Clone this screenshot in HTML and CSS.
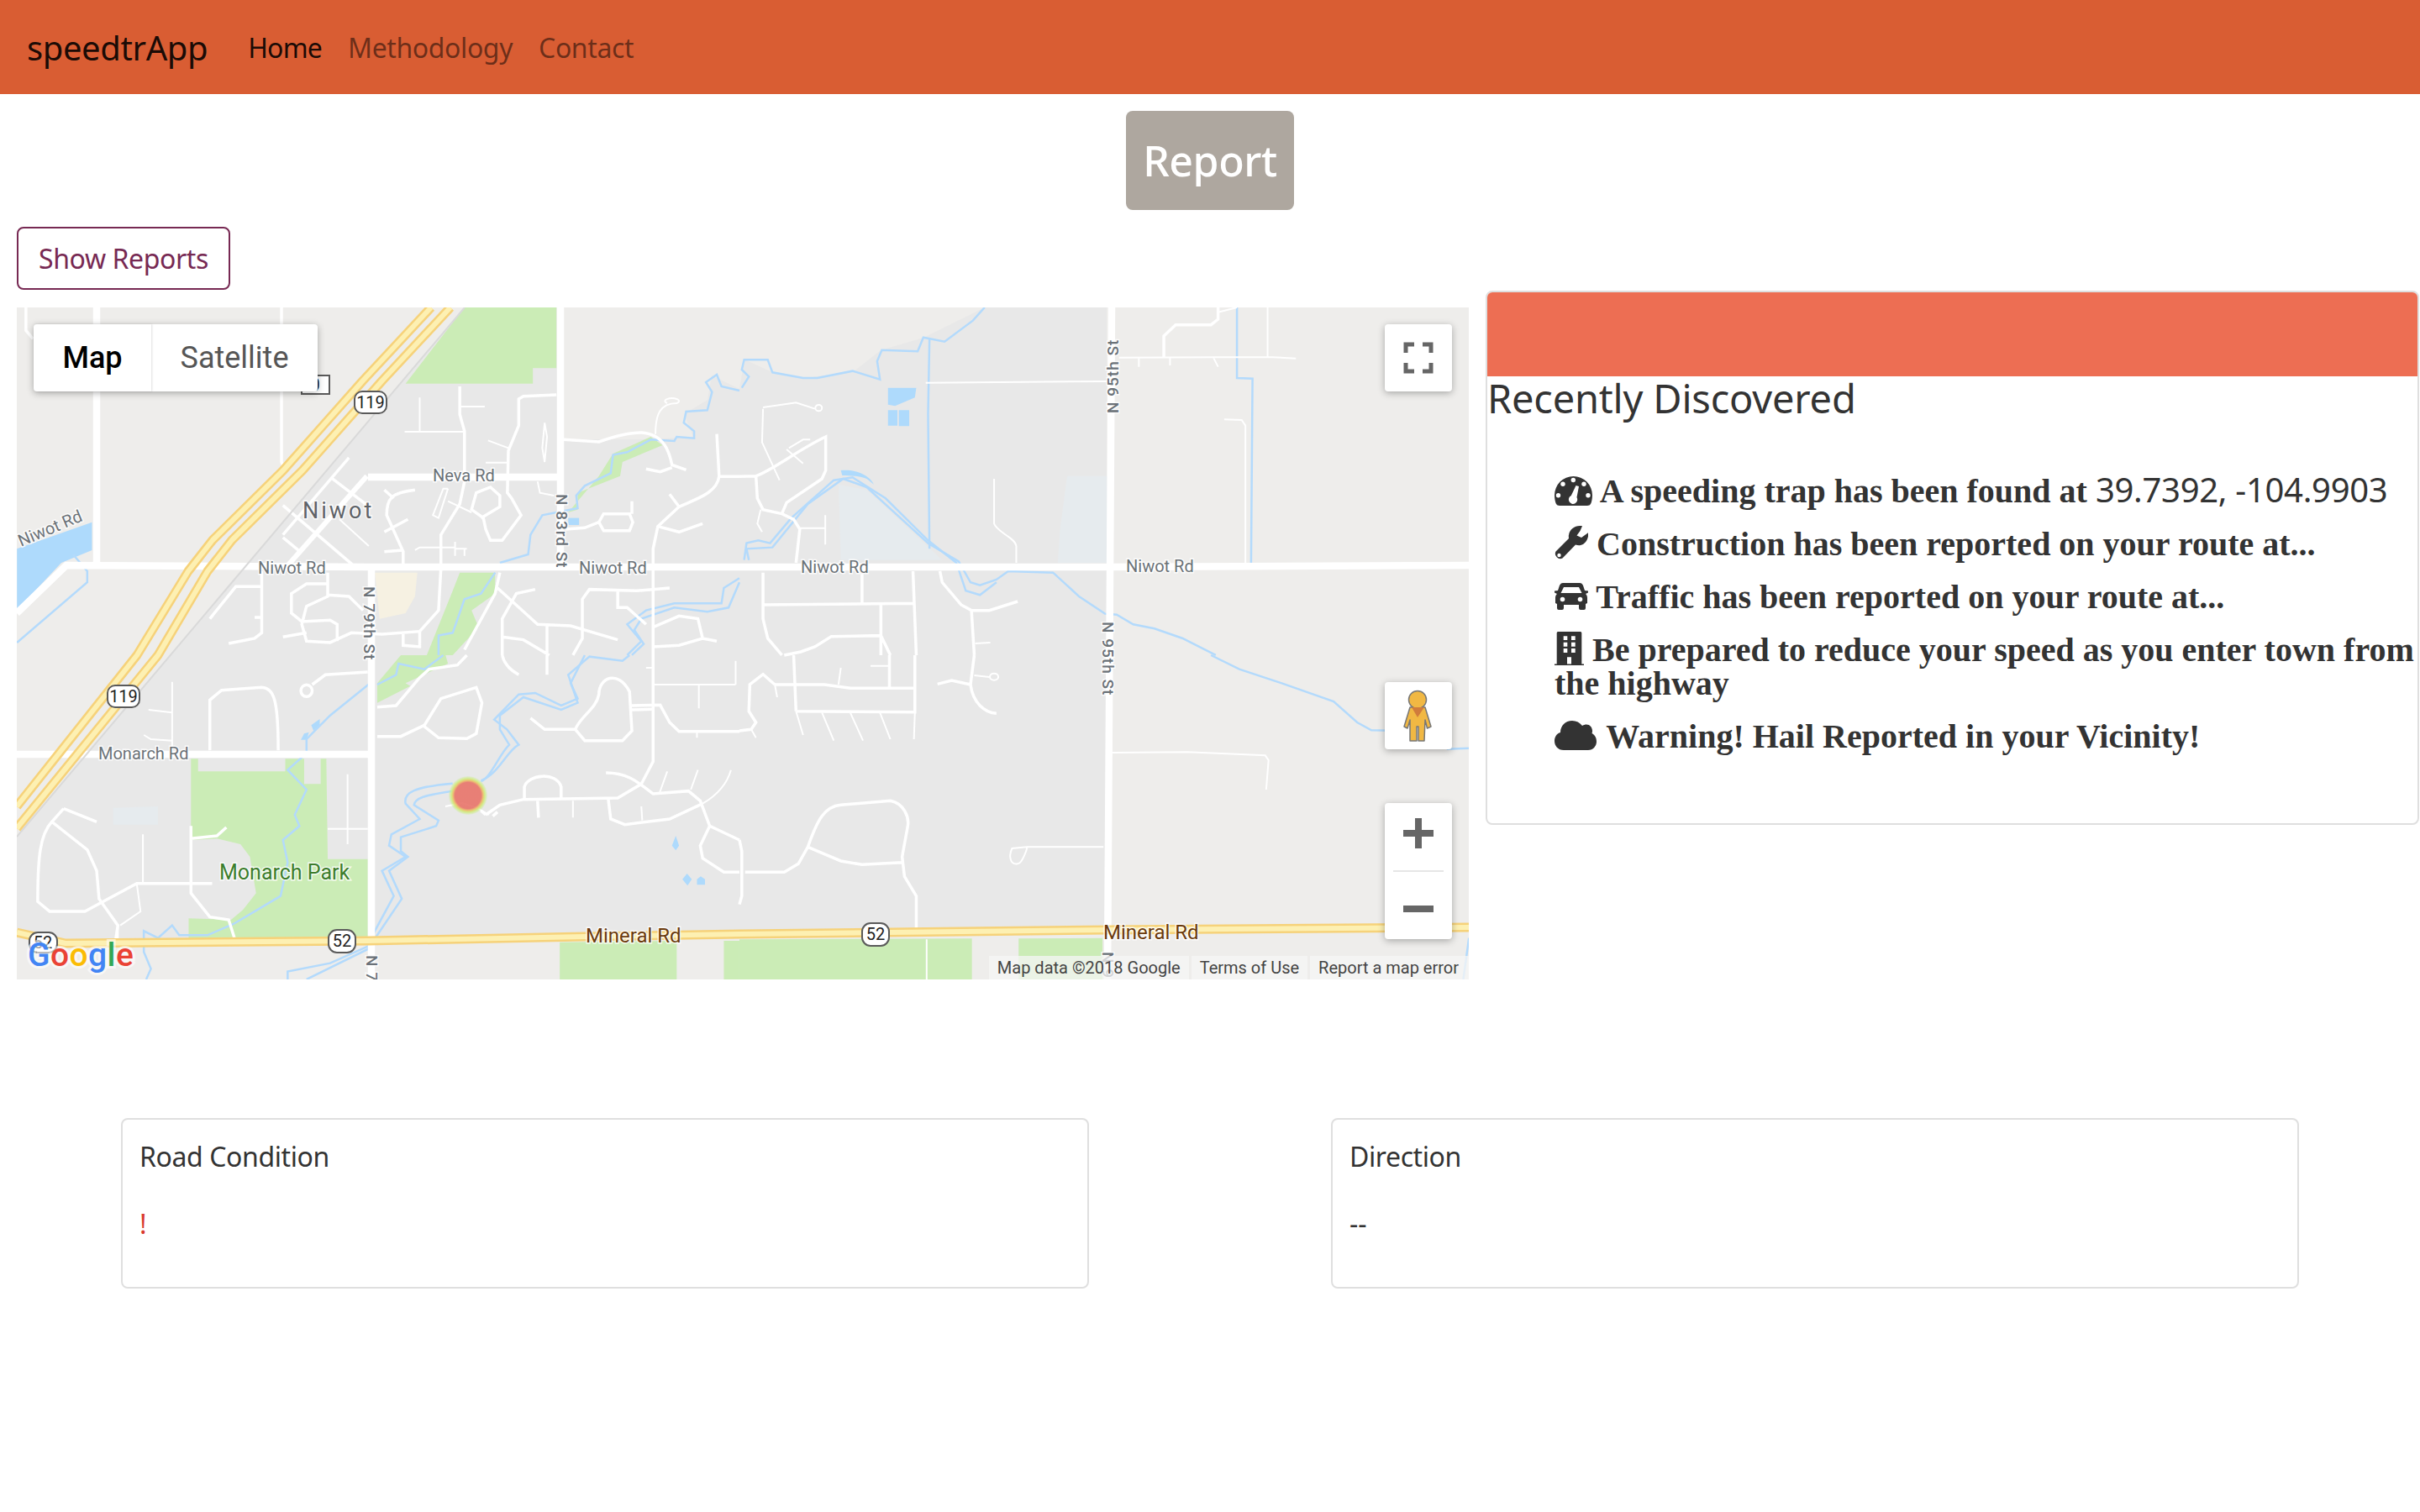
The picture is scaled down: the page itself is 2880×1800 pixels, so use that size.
FILE: index.html
```html
<!DOCTYPE html>
<html lang="en">
<head>
  <meta charset="UTF-8">
  <title>speedtrApp</title>
  <link rel="stylesheet" href="styles.css">
</head>
<body>
  <nav class="navbar">
    <a class="brand" href="#">speedtrApp</a>
    <a class="nav-link active" href="#">Home</a>
    <a class="nav-link" href="#">Methodology</a>
    <a class="nav-link" href="#">Contact</a>
  </nav>

  <div class="report-row">
    <button class="report-btn">Report</button>
  </div>

  <div class="main-row">
    <div class="map-col">
      <button class="show-btn">Show Reports</button>
      <div class="map">
        <svg class="map-svg" viewBox="0 0 1728 800" width="1728" height="800">
          <defs>
            <radialGradient id="heat">
              <stop offset="0" stop-color="#e8766c"/>
              <stop offset="0.68" stop-color="#e8766c"/>
              <stop offset="0.78" stop-color="#ebc06a"/>
              <stop offset="0.86" stop-color="#d2ea7c"/>
              <stop offset="1" stop-color="#c8ee90" stop-opacity="0.2"/>
            </radialGradient>
          </defs>
          <rect width="1728" height="800" fill="#eeedeb"/>
          <path class="urban" d="M533 0L648 0L648 157L754 157L805 154L794 127L822 110L827 81L860 97L866 62L899 77L936 84L995 77L1028 51L1079 36L1152 0L1297 0L1297 742L676 749L418 754L58 757L0 744L0 630Z"/>

          <!-- left half, upper -->
          <g transform="translate(-20,-6) scale(.5612,.3333)">
            <path class="park" d="M985 18L1180 18L1180 235L1130 235L1130 290L860 290Z"/>
            <path class="park" d="M1380 480L1405 510L1320 570L1315 620L1225 680L1225 740L1205 750L1270 620L1300 540Z"/>
            <path class="park" d="M975 965L1050 965L1050 1040L1000 1100L1015 1160L960 1260L905 1260L960 1030Z"/>
            <path class="school" d="M795 965L885 965L880 1050L860 1110L805 1130Z"/>
            <path class="water" d="M36 880L195 785L195 885L130 930L80 1020L36 1100Z"/>
            <path class="water" d="M1205 770L1228 770L1228 795L1205 795Z"/>
            <path class="river" d="M155 900L185 960L185 1000L36 1215"/>
            <path class="river" d="M1568 315L1530 300L1520 258L1497 285L1510 320L1500 385L1455 390L1450 430L1472 460L1472 485L1435 480L1430 495L1380 490L1330 535L1300 545L1295 610L1240 655L1222 690L1225 735L1150 760L1125 830L1120 900L1060 930"/>
            <path class="river" d="M1050 965L1020 1040L985 1060L960 1180L930 1190L930 1260"/>
            <path class="river" d="M1568 985L1535 1020L1530 1075L1430 1075L1370 1100L1330 1150L1360 1210L1330 1260"/>
            <path class="river" d="M1568 1000L1545 1090L1500 1105L1430 1090L1360 1130L1345 1170L1365 1220L1340 1260"/>
            <path class="road" d="M597 18L597 570L605 605M55 18L55 100L70 130"/>
            <path class="road" d="M1195 490L1270 498C1300 480 1330 465 1360 465C1410 470 1420 540 1425 580L1455 598M1370 595L1400 605L1425 590"/>
            <path class="road" d="M1180 330L1110 335L1100 345L1100 440L1078 530L1076 680L1085 700L1105 760L1065 850L1040 850L1030 810L1025 770L1000 740L1010 680L1040 660L1060 690L1060 730L1020 770"/>
            <path class="road" d="M975 300L975 400L985 460L985 640L975 720L935 830L935 940"/>
            <path class="road thin" d="M975 372L1028 372M890 340L890 462M858 462L985 462M1035 493L1078 520M1030 572L1076 572"/>
            <path class="road" d="M740 555L600 830M705 630L775 720M600 725L750 940M600 840L640 895"/>
            <path class="road thin" d="M720 775L782 870"/>
            <path class="road wide" d="M778 620L610 940"/>
            <path class="road" d="M880 670C830 680 820 700 820 760L855 890L855 940M815 820L865 775M815 890L855 885M815 670L835 700"/>
            <path class="road thin" d="M1140 640L1145 680L1175 690"/>
            <path class="road" d="M1568 622L1525 622L1520 470M1525 622C1520 680 1480 700 1440 730M1420 685L1440 730L1395 800L1385 880L1385 1260M1395 800L1440 820L1490 790"/>
            <path class="road" d="M1280 755L1335 755L1342 785L1335 815L1280 815L1270 785ZM1340 710L1340 755M1200 810L1240 805L1270 785"/>
            <path class="road thin" d="M1415 360a15 10 0 1 1 20 0C1400 360 1390 400 1390 470M1155 430L1160 480L1155 570L1150 520Z"/>
            <path class="road thin" d="M950 665L940 665L918 760L930 770L950 665M950 710L1000 750"/>
            <path class="road thin" d="M880 885L890 875L965 875M965 855L965 905M990 880L965 880M985 880L985 905"/>
            <path class="road" d="M555 960L555 1180L540 1200L485 1218M555 1015L500 1015L445 1130M540 1125L555 1125"/>
            <path class="road" d="M695 965L695 1050L650 1085L640 1150L650 1210L700 1215L745 1180L810 1185L890 1175L930 1100L935 950M695 1005L650 1005L618 1040L618 1110L640 1140L700 1135L715 1150L715 1210M695 1045L740 1050L770 1100"/>
            <path class="road" d="M600 1195L650 1180M855 1185L855 1225L890 1230L890 1175"/>
            <path class="road" d="M1060 965L1050 1040L985 1240M1055 1020L1140 1150L1210 1155L1310 1205M1135 1025L1095 1040L1065 1130L1065 1260M1065 1195L1110 1205L1165 1260M1160 1150L1160 1260"/>
            <path class="road" d="M1420 1020L1350 1030L1250 1025L1235 1060L1235 1200L1215 1260M1310 1030L1310 1090L1330 1090L1370 1150"/>
            <path class="road" d="M1385 1160L1440 1120L1480 1130L1490 1200M1385 1230L1440 1225L1490 1200L1520 1210"/>
          </g>

          <!-- left half, lower -->
          <g transform="translate(-20,414) scale(.5612,.3333)">
            <path class="park" d="M405 370L420 370L420 415L605 415L605 370L645 370L645 460L680 460L680 370L692 370L695 728L780 728L780 1010L400 1020L400 940L490 945L515 910L543 850L530 720L510 675L460 655L405 660Z"/>
            <path class="park" d="M850 0L945 0L950 30L860 100L870 110L800 170L800 100Z"/>
            <path class="park" d="M1187 1025L1435 1020L1435 1158L1187 1158ZM1535 1020L1568 1020L1568 1158L1535 1158Z"/>
            <path class="patch" d="M240 545L335 540L335 605L240 605Z"/>
            <path class="water" d="M1425 680L1433 645L1440 680L1433 697ZM1447 800L1457 780L1467 800L1458 823ZM1478 800L1486 790L1495 800L1495 820L1478 820ZM645 280L655 275L650 302L638 302ZM660 250L678 228L678 250L665 270Z"/>
            <path class="river" d="M785 100L700 215L650 300L650 350L610 410L650 480L625 570L635 610L600 660L610 740L595 860L545 910L495 960L440 1000L380 1000L365 965L335 1010L305 985L305 1060L320 1120L310 1158"/>
            <path class="river" d="M940 0L900 50L845 30L840 70L800 105"/>
            <path class="river" d="M960 458C880 470 855 490 860 530L890 585L830 640L825 680L860 720L810 770L835 860L790 1000L780 1040L700 1100L610 1130L610 1158"/>
            <path class="river" d="M960 485C900 500 880 510 878 535L930 590L925 610L850 650L850 700L865 720L825 770L852 870L800 1000L780 1050L650 1158"/>
            <path class="river" d="M1020 448C1060 420 1075 340 1100 320L1075 265L1048 230L1100 140L1135 135L1190 180L1225 155L1210 100L1240 0"/>
            <path class="river" d="M1020 450C1040 440 1060 350 1080 320L1060 265L1060 215L1110 150L1190 195L1225 170L1205 70L1250 5L1320 20L1335 0"/>
            <path class="road thin" d="M365 95L365 340M315 195L365 205M305 285L320 300L365 305"/>
            <path class="road" d="M445 340L445 160L470 125L555 115C580 120 590 150 590 340"/>
            <path class="road" d="M780 60L690 70L662 105M800 185L840 180L890 80L910 50L970 35L990 0M1065 0C1070 40 1090 60 1100 70M1160 0L1160 70"/>
            <ellipse class="road" cx="650" cy="127" rx="12" ry="21"/>
            <path class="road" d="M800 290L850 290L900 250L935 155L1010 115L1022 170L1010 280L990 298L930 295L900 255"/>
            <path class="road" d="M1385 0L1385 380L1360 460L1310 510L1110 515L1060 535L1030 570M1020 555L1030 570M1055 560L1045 575"/>
            <path class="road" d="M1112 515L1112 470C1120 425 1180 415 1190 470L1190 515M1140 520L1142 580"/>
            <path class="road thin" d="M1215 520L1215 580M1415 415L1398 495M1480 410L1465 480M1550 410C1540 470 1510 510 1490 530M1360 540L1362 590"/>
            <path class="road" d="M1285 420C1330 420 1350 450 1385 495L1460 485L1485 520L1505 610L1568 660M1290 515L1295 585L1325 605L1420 585L1490 530"/>
            <path class="road" d="M1505 610L1485 680L1490 725L1535 775L1568 775"/>
            <path class="road" d="M1125 225L1155 265L1220 265C1230 220 1265 190 1270 140C1270 80 1310 50 1335 130L1340 270L1320 305L1240 305L1220 265"/>
            <path class="road" d="M1340 180L1400 178L1420 240L1440 272L1568 272M1340 195L1385 193"/>
            <path class="road thin" d="M1385 105L1560 105M1482 105L1482 190M1560 20L1560 105M1370 45L1385 45M1478 275L1478 295"/>
            <path class="road" d="M135 548L205 595M135 548L110 595L185 695L205 770L210 870L250 965L245 1020M110 595C85 640 80 720 80 880L105 915L180 915L290 815L450 815"/>
            <path class="road thin" d="M303 640L303 810M290 815L298 915L255 965M250 965L250 1020M695 620L780 620M737 425L737 675"/>
            <path class="road" d="M405 610L405 850L445 935L485 945L498 1015M405 655L460 645L480 615"/>
          </g>

          <!-- right half, upper -->
          <g transform="translate(860,-6) scale(.5612,.3333)">
            <path class="patch" d="M210 650L270 670L430 920L215 920Z"/>
            <path class="patch" d="M695 620L780 620L780 930L675 930L680 810Z"/>
            <path class="water" d="M315 305L375 305L372 340L330 370L315 365ZM315 385L335 385L335 440L315 440ZM338 385L360 385L360 442L338 442Z"/>
            <path class="water" d="M215 600C245 595 275 615 285 650L270 630C255 620 235 618 218 618Z"/>
            <path class="river" d="M520 18L495 65L435 140L390 125L378 175L302 170L292 210L298 275L240 245L165 270L135 270L70 250L60 205L10 205L5 240L20 265L5 305"/>
            <path class="river" d="M403 130L400 400L403 880"/>
            <path class="river" d="M1055 18L1055 270L1088 272L1085 930"/>
            <path class="river" d="M20 920L15 880L70 875L145 720L220 630L270 660L400 860L465 925L490 1000L510 1010L545 990L570 960L665 965L720 1050L775 1112L800 1115L835 1150L880 1165L940 1200L1010 1260"/>
            <path class="river" d="M10 920L15 860L40 850L65 860L110 770L200 635L240 625L310 700L400 850L460 930L480 1030L510 1045L545 1000"/>
            <path class="road" d="M1015 18L1015 60L1000 80L925 80L900 120L900 195"/>
            <path class="road thin" d="M805 197L1120 195L1180 200M847 197L847 230M913 197L913 225M1005 197L1015 230M1120 18L1120 195M1015 35L1055 18"/>
            <path class="road thin" d="M395 287L780 282M1028 418L1065 420L1073 440L1073 930M540 630L540 790C545 820 585 840 587 870L587 930"/>
            <path class="road" d="M0 622L35 620C70 600 130 520 183 480L183 600L175 630L100 715L90 755L115 775L128 810L120 930M35 620L38 700L50 740L90 755"/>
            <path class="road thin" d="M45 740L38 790L48 820M50 375L120 358L160 380M50 380L48 500L85 635M100 525L135 575M105 520L135 490L150 490M128 806L182 806M182 760L182 865"/>
            <path class="road" d="M50 965L50 1130L60 1200L90 1260M50 1080L372 1075M260 970L260 1075M300 1080L300 1260M368 960L375 1260M95 1260L130 1248L160 1230L195 1193L300 1190L320 1260"/>
            <path class="road" d="M425 960L430 1000L470 1080L492 1100L498 1260M492 1100L530 1100L590 1068"/>
            <path class="road thin" d="M500 1218L532 1215"/>
            <ellipse class="road thin" cx="168" cy="377" rx="7" ry="11"/>
          </g>

          <!-- right half, lower -->
          <g transform="translate(860,414) scale(.5612,.3333)">
            <path class="park" d="M0 1015L493 1012L493 1158L0 1158ZM592 1012L770 1010L770 1158L592 1158Z"/>
            <path class="river" d="M1000 0L1060 50L1150 100L1260 165L1310 240L1340 268L1400 270"/>
            <path class="river" d="M1500 335L1547 332M1547 1010L1535 1158"/>
            <path class="road" d="M75 105L180 105L235 118L372 118M120 200L372 203L372 0M115 0L120 200M318 0L318 118M75 105L50 68L22 105L20 200L35 240L25 265L0 270"/>
            <path class="road thin" d="M120 200L135 285M175 205L200 305M235 205L262 305M298 205L320 300M372 205L370 300M278 38L318 38M215 45L210 105M75 105L80 150M25 265L35 295M397 1015L397 1158"/>
            <path class="road" d="M498 0L490 105C495 170 520 205 545 208M420 103L450 90L490 105"/>
            <path class="road thin" d="M498 72L530 78M790 348L950 346L1115 358L1122 375L1117 480"/>
            <ellipse class="road thin" cx="540" cy="77" rx="9" ry="12"/>
            <path class="road" d="M145 685L215 735L260 748L345 740M145 685C165 590 180 540 215 535L320 520C350 530 360 580 357 610L345 720L350 790L375 860L375 990M145 685L125 745L95 775L12 775M0 660L5 700L5 860L0 890"/>
            <path class="road thin" d="M772 685L610 685L578 690C570 720 575 750 590 745C600 745 610 690 610 685"/>
          </g>

          <!-- main roads -->
          <path class="main" d="M95 0L95 303M0 364L59 307L420 309L1300 309L1728 307"/>
          <path class="main" d="M647 0L647 309M1303 0L1298 800M422 309L422 800M0 532L422 532M418 202L647 202"/>
          <path class="hw-edge" d="M533 0L0 630"/>
          <path class="hwy-out" d="M493 0L412 87L317 194L233 277L204 314L143 414L0 594M516 0L435 87L340 194L256 277L227 314L168 414L0 620M0 744L58 757L418 754L676 749L860 746L1298 741L1728 738"/>
          <path class="hwy-in" d="M493 0L412 87L317 194L233 277L204 314L143 414L0 594M516 0L435 87L340 194L256 277L227 314L168 414L0 620M0 744L58 757L418 754L676 749L860 746L1298 741L1728 738"/>

          <!-- heatmap point -->
          <path class="road thin" d="M510 594L530 590L548 596L562 604"/>
          <circle class="heat" cx="537" cy="581" r="23" fill="url(#heat)"/>

          <!-- shields -->
          <g class="shield"><rect x="339" y="81" width="33" height="22"/><text x="355" y="99">0</text></g>
          <g class="shield"><rect x="402" y="100" width="38" height="26" rx="9"/><text x="421" y="120">119</text></g>
          <g class="shield"><rect x="108" y="450" width="38" height="26" rx="9"/><text x="127" y="470">119</text></g>
          <g class="shield"><rect x="15" y="744" width="33" height="24" rx="10"/><text x="31" y="763">52</text></g>
          <g class="shield"><rect x="371" y="741" width="32" height="27" rx="10"/><text x="387" y="761">52</text></g>
          <g class="shield"><rect x="1006" y="733" width="32" height="27" rx="10"/><text x="1022" y="753">52</text></g>

          <!-- labels -->
          <g class="label">
            <text transform="translate(5,285) rotate(-23)">Niwot Rd</text>
            <text x="287" y="317">Niwot Rd</text>
            <text x="669" y="317">Niwot Rd</text>
            <text x="933" y="316">Niwot Rd</text>
            <text x="1320" y="315">Niwot Rd</text>
            <text x="495" y="207">Neva Rd</text>
            <text x="97" y="538">Monarch Rd</text>
            <text class="wide-label" transform="translate(642,222) rotate(90)">N 83rd St</text>
            <text class="wide-label" transform="translate(413,332) rotate(90)">N 79th St</text>
            <text class="wide-label" transform="translate(1311,126) rotate(-90)">N 95th St</text>
            <text class="wide-label" transform="translate(1292,374) rotate(90)">N 95th St</text>
            <text class="wide-label" transform="translate(416,771) rotate(90)">N 7</text>
            <text class="wide-label" transform="translate(1292,767) rotate(90)">N 9</text>
          </g>
          <text class="town" x="340" y="251">Niwot</text>
          <text class="park-label" x="241" y="681">Monarch Park</text>
          <text class="mineral" x="677" y="756">Mineral Rd</text>
          <text class="mineral" x="1293" y="752">Mineral Rd</text>
          <text class="google" x="13" y="784"><tspan fill="#4285f4">G</tspan><tspan fill="#ea4335">o</tspan><tspan fill="#fbbc05">o</tspan><tspan fill="#4285f4">g</tspan><tspan fill="#34a853">l</tspan><tspan fill="#ea4335">e</tspan></text>
        </svg>

        <div class="map-type">
          <span class="map-type-btn on">Map</span>
          <span class="map-type-btn">Satellite</span>
        </div>

        <div class="ctl fullscreen">
          <svg viewBox="0 0 80 80" width="80" height="80">
            <path d="M25 35V25H35M45 25H55V35M55 47V57H45M35 57H25V47" transform="translate(0,-1)" fill="none" stroke="#666" stroke-width="5"/>
          </svg>
        </div>

        <div class="ctl pegman">
          <svg viewBox="0 0 80 80" width="80" height="80">
            <path d="M30 30L23 53L27 55L30 45L30 70L38 70L38 53L40 53L40 70L47 70L48 45L50.500 55L55 53L48 30Z" fill="#f1b843" stroke="#777" stroke-width="1.500" stroke-linejoin="round"/>
            <circle cx="39" cy="21" r="10.500" fill="#f1b843" stroke="#777" stroke-width="1.500"/>
            <path d="M32 30L47 30L39 42Z" fill="#d07c3c"/>
          </svg>
        </div>

        <div class="ctl zoom-ctl">
          <svg viewBox="0 0 80 162" width="80" height="162">
            <path d="M36 18H44V32H58V40H44V54H36V40H22V32H36Z" fill="#666"/>
            <rect x="10" y="80" width="60" height="2" fill="#e6e6e6"/>
            <rect x="22" y="122" width="36" height="8" fill="#666"/>
          </svg>
        </div>

        <div class="attribution">
          <span>Map data ©2018 Google</span>
          <span>Terms of Use</span>
          <span>Report a map error</span>
        </div>
      </div>
    </div>

    <div class="side-col">
      <div class="card side-card">
        <div class="card-head"></div>
        <h3 class="side-title">Recently Discovered</h3>
        <ul class="alerts">
          <li>
            <svg class="ico ico-gauge" viewBox="0 0 45 35"><path d="M22.500 0A22.500 22.500 0 0 0 0 22.500C0 27 1 31 2 33Q3 35 6 35H39Q42 35 43 33C44 31 45 27 45 22.500A22.500 22.500 0 0 0 22.500 0Z" fill="#333"/><g fill="#fff"><circle cx="22.300" cy="4.500" r="2.700"/><circle cx="10" cy="9.300" r="2.700"/><circle cx="35" cy="9.300" r="2.700"/><circle cx="4.500" cy="22.700" r="2.700"/><circle cx="40" cy="22.700" r="2.700"/><path d="M25.500 11L29 12L26.500 25A5.200 5.200 0 1 1 19.800 23Z"/></g></svg>
            A speeding trap has been found at <span class="coords">39.7392, -104.9903</span>
          </li>
          <li>
            <svg class="ico ico-wrench" viewBox="0 0 40 40"><path d="M33 .2C26-1 18 3 17 11C16.500 12 17 14 17 15L1.500 30.500A6 6 0 0 0 9.500 38.500L25 22.500C27 23 29 23.500 31 23C37 21.500 41 15 40 8.300L32 14L26.500 11.500L30.500 6ZM5.500 32.800A2.200 2.200 0 1 1 5.500 37.200A2.200 2.200 0 0 1 5.500 32.800Z" fill="#333" fill-rule="evenodd"/></svg>
            Construction has been reported on your route at...
          </li>
          <li>
            <svg class="ico ico-car" viewBox="0 0 40 32"><path d="M10 0H30C32 0 33 1 34 3L36 9L40 9.500V11.500L37 13C38.500 14 39 16 39 18V24L37 25V30Q37 32 35 32H31Q29 32 29 30V26H11V30Q11 32 9 32H5Q3 32 3 30V25L1 24V18C1 16 1.500 14 3 13L0 11.500V9.500L4 9L6 3C7 1 8 0 10 0ZM11 5L7.500 12H32.500L29 5ZM9.500 16.700A2.800 2.800 0 1 0 9.500 22.300A2.800 2.800 0 0 0 9.500 16.700ZM30.500 16.700A2.800 2.800 0 1 0 30.500 22.300A2.800 2.800 0 0 0 30.500 16.700Z" fill="#333" fill-rule="evenodd"/></svg>
            Traffic has been reported on your route at...
          </li>
          <li>
            <svg class="ico ico-building" viewBox="0 0 35 40"><path d="M4 0H31Q32.300 0 32.300 1.500V38.500H35V40H0V38.500H2.700V1.500Q2.700 0 4 0ZM10.700 5.300V10H15.300V5.300ZM20 5.300V10H24.700V5.300ZM10.700 12.700V17.700H15.300V12.700ZM20 12.700V17.700H24.700V12.700ZM10.700 20V25H15.300V20ZM20 20V25H24.700V20ZM15 30.300V38.500H20V30.300Z" fill="#333" fill-rule="evenodd"/></svg>
            Be prepared to reduce your speed as you enter town from the highway
          </li>
          <li>
            <svg class="ico ico-cloud" viewBox="0 0 50 35"><path d="M11 35C4 35 0 30 0 24C0 19 3 15 7 14C7 6 13 0 21 0C26 0 30 2 33 6C35 5 36 4.500 38 4.500C42 4.500 45 8 45 12C45 13 45 14 44.500 15C48 17 50 20 50 25C50 30 46 35 40 35Z" fill="#333"/></svg>
            Warning! Hail Reported in your Vicinity!
          </li>
        </ul>
      </div>
    </div>
  </div>

  <div class="cond-row">
    <div class="card cond-card">
      <h5 class="cond-title">Road Condition</h5>
      <p class="cond-val danger">!</p>
    </div>
    <div class="card cond-card">
      <h5 class="cond-title">Direction</h5>
      <p class="cond-val">--</p>
    </div>
  </div>
</body>
</html>
```

FILE: styles.css
```css
body {
  margin: 0;
  background: #fff;
  color: #333;
  font-family: "Noto Sans", sans-serif;
  font-size: 32px;
}
a { text-decoration: none; }

.navbar {
  display: flex;
  align-items: center;
  height: 112px;
  padding: 0 32px;
  background: #d95d33;
}
.brand {
  font-size: 40px;
  letter-spacing: -0.4px;
  color: rgba(0,0,0,0.9);
  margin-right: 48px;
}
.nav-link {
  letter-spacing: -0.4px;
  color: rgba(0,0,0,0.5);
  margin-right: 31px;
}
.nav-link.active {
  letter-spacing: -0.8px;
  color: rgba(0,0,0,0.9);
}

.report-row {
  display: flex;
  justify-content: center;
  padding-top: 20px;
}
.report-btn {
  width: 200px;
  height: 118px;
  border: 0;
  border-radius: 8px;
  background: #aea79f;
  color: #fff;
  font-family: inherit;
  font-size: 50px;
  font-weight: 500;
  letter-spacing: -0.4px;
}

.main-row {
  display: flex;
  gap: 20px;
  margin-top: 20px;
  padding: 0 1px 0 20px;
}
.map-col { width: 1728px; flex: none; }
.side-col { flex: 1; padding-top: 76px; }

.show-btn {
  display: block;
  width: 254px;
  height: 75px;
  border: 2px solid #772953;
  border-radius: 8px;
  background: #fff;
  color: #772953;
  font-family: inherit;
  font-size: 32px;
  letter-spacing: -0.4px;
  padding: 0;
}

.map {
  position: relative;
  width: 1728px;
  height: 800px;
  margin-top: 21px;
  overflow: hidden;
}
.map-svg { display: block; }

.urban { fill: #e8e8e8; }
.park { fill: #cbecb6; }
.school { fill: #f6f1e2; }
.patch { fill: #e6ebee; }
.water { fill: #aedafc; }
.river {
  fill: none;
  stroke: #b3dafc;
  stroke-width: 2.5;
  vector-effect: non-scaling-stroke;
}
.road {
  fill: none;
  stroke: #fff;
  stroke-width: 3.5;
  vector-effect: non-scaling-stroke;
}
.road.thin { stroke-width: 2; }
.road.wide { stroke-width: 6; }
.main {
  fill: none;
  stroke: #fff;
  stroke-width: 8.500;
}
.hw-edge { fill: none; stroke: #d9d9d9; stroke-width: 2; }
.hwy-out { fill: none; stroke: #f6d27a; stroke-width: 11; stroke-linejoin: round; }
.hwy-in { fill: none; stroke: #fdf0b2; stroke-width: 6; stroke-linejoin: round; }
.heat { opacity: 0.92; }

.shield rect { fill: #fff; stroke: #5a5a5a; stroke-width: 2; }
.shield text {
  font: 20px Roboto, sans-serif;
  fill: #222;
  text-anchor: middle;
}
.label text,
.town,
.park-label,
.mineral {
  font-family: Roboto, sans-serif;
  paint-order: stroke;
  stroke: #fff;
  stroke-width: 3px;
  stroke-opacity: 0.8;
}
.label text { font-size: 20px; fill: #6b7278; }
.label .wide-label { font-size: 19px; letter-spacing: 1px; font-weight: 500; }
.town { font-size: 27px; letter-spacing: 3px; fill: #5f6368; }
.park-label { font-size: 25px; fill: #3c7d2c; }
.mineral { font-size: 24px; fill: #6b3a0c; }
.google {
  font-family: Roboto, sans-serif;
  font-size: 39px;
  font-weight: 500;
  letter-spacing: 0.4px;
  paint-order: stroke;
  stroke: #fff;
  stroke-width: 6px;
  stroke-opacity: 0.6;
}

.map-type {
  position: absolute;
  left: 20px;
  top: 20px;
  display: flex;
  height: 80px;
  background: #fff;
  border-radius: 4px;
  box-shadow: 0 2px 8px rgba(0,0,0,0.3);
  font-family: Roboto, sans-serif;
  font-size: 36px;
  line-height: 80px;
  color: #565656;
}
.map-type-btn { width: 198px; text-align: center; }
.map-type-btn.on {
  width: 140px;
  color: #000;
  font-weight: 500;
  box-shadow: 1px 0 2px rgba(0,0,0,0.12);
}
.ctl {
  position: absolute;
  left: 1628px;
  width: 80px;
  background: #fff;
  border-radius: 4px;
  box-shadow: 0 2px 8px rgba(0,0,0,0.3);
}
.ctl svg { display: block; }
.fullscreen { top: 20px; height: 80px; }
.pegman { top: 446px; height: 80px; }
.zoom-ctl { top: 590px; height: 162px; }

.attribution {
  position: absolute;
  right: 0;
  bottom: 0;
  display: flex;
  gap: 3px;
  height: 28px;
  font-family: Roboto, sans-serif;
  font-size: 20px;
  line-height: 28px;
  color: #444;
}
.attribution span {
  padding: 0 10px;
  background: rgba(245,245,245,0.75);
}
.attribution span:last-child { padding-right: 12px; }

.card {
  border: 2px solid #dfdfdf;
  border-radius: 8px;
  background: #fff;
  box-sizing: border-box;
}
.side-card { height: 636px; overflow: hidden; }
.card-head { height: 100px; background: #ed6e53; }
.side-title {
  margin: 0;
  font-size: 47px;
  letter-spacing: -0.2px;
  font-weight: 400;
  line-height: 53px;
}
.alerts {
  list-style: none;
  margin: 62px 0 0;
  padding: 0 0 0 80px;
  font-family: "Liberation Serif", serif;
  font-size: 40px;
  font-weight: 700;
  line-height: 40px;
}
.alerts li { margin-bottom: 23px; }
.coords {
  font-family: "Noto Sans", sans-serif;
  font-weight: 400;
  letter-spacing: -0.3px;
}
.ico { margin-top: -12px; }
.ico-gauge { width: 45px; height: 35px; vertical-align: -4px; margin-right: 1px; }
.ico-wrench { width: 40px; height: 40px; vertical-align: -5px; }
.ico-car { width: 40px; height: 32px; vertical-align: -2px; }
.ico-building { width: 35px; height: 40px; vertical-align: -5px; }
.ico-cloud { width: 50px; height: 35px; vertical-align: -3px; margin-right: 2px; }

.cond-row {
  display: flex;
  justify-content: space-around;
  margin-top: 165px;
}
.cond-card {
  width: 1152px;
  height: 203px;
  padding: 20px;
}
.cond-title {
  margin: 0;
  font-size: 32px;
  letter-spacing: -0.4px;
  font-weight: 400;
  line-height: 48px;
}
.cond-val {
  margin: 32px 0 0;
  line-height: 48px;
}
.danger { color: #d9392c; }
```
